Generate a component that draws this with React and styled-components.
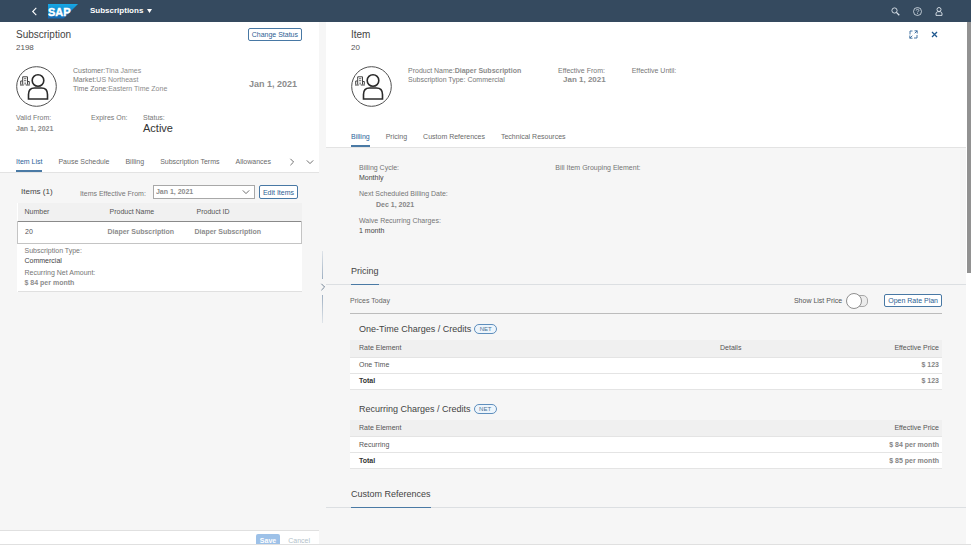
import React, { useState } from "react";
import styled, { createGlobalStyle } from "styled-components";

const GlobalStyle = createGlobalStyle`
    * {
        box-sizing: border-box;
    }
    body {
        margin: 0;
        background: #f6f6f6;
        color: #555;
        font-family: "Liberation Sans", Arial, sans-serif;
        font-size: 7px;
        line-height: 10px;
    }
    button, input, select {
        font-family: inherit;
        font-size: inherit;
        line-height: inherit;
        margin: 0;
    }
    svg {
        display: block;
        flex: none;
    }
`

const Page = styled.div`
    display: flex;
    flex-direction: column;
    height: 100vh;
    overflow: hidden;
    border-bottom: 1px solid #e0e0e0;
`
const ShellBar = styled.header`
    display: flex;
    align-items: center;
    flex: none;
    height: 22px;
    padding: 0 27px 0 29px;
    background: #354a5f;
    color: #fff;
`
const ShellTitle = styled.button`
    display: flex;
    align-items: center;
    gap: 4px;
    padding: 0;
    border: 0;
    background: none;
    color: #fff;
    font-size: 8px;
    font-weight: 700;
    cursor: pointer;
`
const IconButton = styled.button`
    display: flex;
    align-items: center;
    justify-content: center;
    width: 10px;
    height: 12px;
    padding: 0;
    border: 0;
    background: none;
    color: inherit;
    cursor: pointer;
`
const Logo = styled.svg`
    margin: 0 12px 0 9px;
`
const ShellActions = styled.div`
    display: flex;
    gap: 12px;
    margin-left: auto;
`
const Columns = styled.div`
    display: grid;
    grid-template-columns: minmax(280px, 319fr) 7px minmax(0, 640fr) 5px;
    flex: 1;
    min-height: 0;
`
const Panel = styled.section`
    display: flex;
    flex-direction: column;
    min-width: 0;
    min-height: 0;
    overflow: hidden;
`
const PanelHeader = styled.div`
    flex: none;
    padding: 6px ${props => props.$right} 0 ${props => props.$left};
    background: #fff;
    border-bottom: 1px solid #e3e3e3;
`
const TitleRow = styled.div`
    display: flex;
    justify-content: space-between;
    align-items: flex-start;
    height: 26px;
`
const Title = styled.h1`
    margin: 0;
    color: #444;
    font-size: 10px;
    font-weight: 400;
    line-height: 13px;
`
const SubTitle = styled.div`
    color: #555;
    font-size: 8px;
    line-height: 13px;
`
const TitleActions = styled.div`
    display: flex;
    gap: 11px;
    padding-right: 27px;
`
const OutlineButton = styled.button`
    height: ${props => props.$height || "13px"};
    padding: 0 3px;
    border: 1px solid #4878a4;
    border-radius: 2px;
    background: #fff;
    color: #2c6093;
    line-height: 11px;
    white-space: nowrap;
    cursor: pointer;
`
const Summary = styled.div`
    display: flex;
    height: 41px;
    margin-top: 12px;
`
const Info = styled.div`
    width: ${props => props.$width || "auto"};
    margin-left: 16px;
    color: #777;
    line-height: 9px;
    white-space: nowrap;
`
const Dates = styled.div`
    display: flex;
    gap: 26px;
    color: #777;
    line-height: 9px;
    white-space: nowrap;
`
const Muted = styled.span`
    color: #8c8c8c;
    font-weight: ${props => (props.$bold ? 700 : 400)};
`
const EffectiveDate = styled.div`
    padding-left: 5px;
    color: #8c8c8c;
    font-size: 8px;
    font-weight: 700;
    line-height: 10px;
`
const BigDate = styled.div`
    margin: auto 5px auto auto;
    padding-bottom: 5px;
    color: #8c8c8c;
    font-size: 9px;
    font-weight: 700;
`
const Facts = styled.div`
    display: grid;
    grid-template-columns: 75px 52px 1fr;
    height: 24px;
    margin-top: 6px;
    color: #777;
`
const DateValue = styled.div`
    padding-top: 1px;
    color: #8c8c8c;
    font-weight: 700;
`
const Status = styled.div`
    color: #333;
    font-size: 11px;
    line-height: 11px;
`
const Tabs = styled.nav`
    display: flex;
    align-items: stretch;
    gap: 16px;
    height: 20px;
    margin-top: ${props => props.$top};
`
const Tab = styled.button`
    padding: 2px 0 0;
    border: 0;
    border-bottom: 2px solid ${props => (props.$active ? "#4a7aa5" : "transparent")};
    background: none;
    color: ${props => (props.$active ? "#2c6399" : "#6a6a6a")};
    white-space: nowrap;
    cursor: pointer;
`
const TabArrows = styled.div`
    display: flex;
    align-items: center;
    gap: 8px;
    margin-left: auto;
    color: #6a6a6a;
`
const ItemsArea = styled.div`
    padding: 12px 17px 0;
`
const ItemsBar = styled.div`
    display: flex;
    align-items: center;
    height: 14px;
    margin-bottom: 4px;
    padding: 0 4px;
`
const ItemsCount = styled.h2`
    margin: 0 auto 0 0;
    color: #444;
    font-size: 8px;
    font-weight: 400;
`
const FilterLabel = styled.label`
    margin-right: 7px;
    padding-top: 4px;
    color: #777;
`
const SelectBox = styled.div`
    display: grid;
    align-items: center;
    width: 102px;
    margin-right: 4px;
    color: #666;
    > * {
        grid-area: 1 / 1;
    }
    > svg {
        justify-self: end;
        margin-right: 5px;
        pointer-events: none;
    }
`
const Select = styled.select`
    width: 100%;
    height: 14px;
    padding: 0 2px;
    appearance: none;
    border: 1px solid #a8a8a8;
    border-radius: 0;
    background: #fff;
    color: #8c8c8c;
    font-weight: 700;
    line-height: 12px;
`
const Table = styled.table`
    width: 100%;
    table-layout: fixed;
    border-collapse: collapse;
    background: #fff;
    th, td {
        padding: 0;
        text-align: left;
        font-weight: 400;
    }
`
const ItemHead = styled.tr`
    height: 18px;
    background: #f1f1f1;
    th:not(:first-child) {
        padding-left: 2px;
    }
    th:first-child {
        padding-left: 7px;
    }
`
const ItemRow = styled.tr`
    height: 22px;
    border: 1px solid #c4c4c4;
    border-top-color: #8a8a8a;
    td:first-child {
        padding-left: 7px;
    }
`
const DetailCell = styled.td`
    && {
        height: 48px;
        padding: 2px 7px;
        border-bottom: 1px solid #e0e0e0;
        vertical-align: top;
    }
`
const FieldLabel = styled.div`
    color: #757575;
`
const FieldValue = styled.div`
    margin-bottom: 2px;
    color: #444;
`
const Footer = styled.footer`
    display: flex;
    flex: none;
    justify-content: flex-end;
    align-items: flex-start;
    gap: 8px;
    height: 14px;
    margin-top: auto;
    padding: 3px 9px 0;
    border-top: 1px solid #e0e0e0;
    background: #fff;
`
const SaveButton = styled.button`
    height: 13px;
    padding: 0 4px;
    border: 0;
    border-radius: 2px;
    background: #9dc1e8;
    color: #fff;
    font-weight: 700;
`
const CancelButton = styled.button`
    height: 13px;
    padding: 0;
    border: 0;
    background: none;
    color: #b3bfca;
`
const Splitter = styled.div`
    display: flex;
    flex-direction: column;
    align-items: center;
    justify-content: center;
    gap: 4px;
    padding-top: 7px;
    color: #6d7f91;
`
const SplitLine = styled.div`
    width: 1px;
    height: 28px;
    background: linear-gradient(to ${props => props.$to}, #9fb0c2, #dfe4e9);
`
const ScrollTrack = styled.div`
    padding-left: 1px;
    background: #fff;
`
const ScrollThumb = styled.div`
    height: 48%;
    background: #929292;
`
const BillingFields = styled.div`
    display: grid;
    grid-template-columns: 196fr 410fr;
    padding: 15px 0 0 33px;
`
const Field = styled.div`
    margin-bottom: 6px;
`
const BillingDate = styled.div`
    padding: 1px 0 0 17px;
    color: #858585;
    font-weight: 700;
`
const SectionHeading = styled.div`
    padding: ${props => props.$top} 25px 0;
    border-bottom: 1px solid #dcdfe2;
`
const SectionTitle = styled.h2`
    display: inline-block;
    height: 20px;
    margin: 0 0 -1px;
    border-bottom: 1px solid #4a7aa5;
    color: #444;
    font-size: 9px;
    font-weight: 400;
    line-height: 12px;
    vertical-align: top;
`
const PricingArea = styled.div`
    padding: 0 24px;
`
const PricingBar = styled.div`
    display: flex;
    align-items: center;
    height: 29px;
    padding-top: 3px;
    border-bottom: 1px solid #bcbcbc;
    color: #666;
`
const SwitchLabel = styled.label`
    margin: 0 2px 0 auto;
    color: #555;
`
const Switch = styled.input`
    display: flex;
    align-items: center;
    appearance: none;
    width: 22px;
    height: 13px;
    margin-right: 18px;
    padding-left: 4px;
    cursor: pointer;
    &::before {
        content: "";
        flex: none;
        width: 18px;
        height: 10px;
        border: 1px solid #a8a8a8;
        border-radius: 5px;
        background: #ececec;
    }
    &::after {
        content: "";
        flex: none;
        width: 14px;
        height: 14px;
        margin-left: ${props => (props.checked ? "-14px" : "-22px")};
        border: 1px solid #8f8f8f;
        border-radius: 50%;
        background: #fff;
    }
`
const ChargeTitle = styled.h3`
    display: flex;
    align-items: center;
    gap: 3px;
    height: ${props => props.$height};
    margin: 0;
    padding: ${props => props.$pad} 0 0 9px;
    color: #444;
    font-size: 9px;
    font-weight: 400;
`
const Badge = styled.span`
    width: 23px;
    height: 10px;
    border: 1px solid #5f8fbd;
    border-radius: 5px;
    background: #edf5fc;
    color: #4d7396;
    font-size: 6px;
    line-height: 8px;
    text-align: center;
`
const ChargeTable = styled(Table)`
    && th, && td {
        padding: 0 4px 0 9px;
        border-bottom: 1px solid #e4e4e4;
    }
    && th:last-child, && td:last-child {
        padding-right: 3px;
        text-align: right;
    }
    && td:last-child {
        color: #858585;
        font-weight: 700;
    }
    && th:nth-child(2) {
        padding-left: 0;
    }
    thead tr {
        height: 17px;
        background: #f0f0f0;
    }
    tbody tr {
        height: 16px;
    }
    tbody tr:last-child td:first-child {
        color: #333;
        font-weight: 700;
    }
`

const Chevron = ({ dir = "right", size = 8 }) => {
    const paths = { right: "M3 1l4 4-4 4", left: "M7 1L3 5l4 4", down: "M1 3l4 4 4-4" }
    return (
        <svg width={size} height={size} viewBox="0 0 10 10" fill="none" stroke="currentColor" strokeWidth="1.2">
            <path d={paths[dir]} />
        </svg>
    )
}

const Avatar = () => (
    <svg width="41" height="41" viewBox="0 0 41 41" fill="none">
        <circle cx="20.5" cy="20.5" r="19.8" stroke="#4f4f4f" strokeWidth="1" />
        <g stroke="#2b2b2b" strokeWidth="1.6">
            <circle cx="22" cy="14.5" r="5.8" />
            <path d="M12.5 33v-4.5c0-4.500 2.500-6.500 6-6.500h7c3.500 0 6 2 6 6.500V33z" />
        </g>
        <g stroke="#444" strokeWidth="1">
            <path d="M6.700 18.500v-7.700h4.800v7.700M4.700 18.500v-3.500h2M11.500 15.500h1.800v3M4 19h3.800M9.800 19h4M9.100 18.500v-2" />
            <path d="M8 12.700h2.300M8 14.700h2.300" strokeWidth="0.8" />
        </g>
    </svg>
)

const SapLogo = () => (
    <Logo width="30" height="15" viewBox="0 0 30 15" role="img" aria-label="SAP">
        <defs>
            <linearGradient id="sapBlue" x1="0" y1="0" x2="0" y2="1">
                <stop offset="0" stopColor="#16a9e6" />
                <stop offset="1" stopColor="#1467b3" />
            </linearGradient>
        </defs>
        <path d="M0 0h30L15.500 14.500H0z" fill="url(#sapBlue)" />
        <text x="0" y="12" fill="#fff" stroke="#fff" strokeWidth="0.4" fontSize="11" fontWeight="700">SAP</text>
    </Logo>
)

const SearchIcon = () => (
    <svg width="9" height="9" viewBox="0 0 9 9" fill="none" stroke="#dce4ec">
        <circle cx="3.500" cy="3.500" r="2.600" strokeWidth="0.9" />
        <path d="M5.400 5.400L8.300 8.300" strokeWidth="1.3" />
    </svg>
)

const HelpIcon = () => (
    <svg width="9" height="9" viewBox="0 0 9 9" fill="none" stroke="#dce4ec" strokeWidth="0.8">
        <circle cx="4.500" cy="4.500" r="4" />
        <path d="M3.200 3.500c0-1.600 2.600-1.600 2.600 0 0 .9-1.300 1-1.300 1.900M4.500 6.200v.9" />
    </svg>
)

const UserIcon = () => (
    <svg width="8" height="9" viewBox="0 0 8 9" fill="none" stroke="#dce4ec" strokeWidth="0.9">
        <circle cx="4" cy="2.500" r="2" />
        <path d="M1 8.400V7c0-1.500.8-2.300 2-2.300h2C6.200 4.700 7 5.500 7 7v1.400z" />
    </svg>
)

const ExpandIcon = () => (
    <svg width="9" height="9" viewBox="0 0 9 9" fill="none" stroke="#33669a" strokeWidth="0.9">
        <path d="M3.500 1H1v3.500M5.500.8h2.700v2.700M8.200.8L5.700 3.300M8 5v3H5M.8 5.500v2.700h2.700M.8 8.200l2.500-2.500" />
    </svg>
)

const CloseIcon = () => (
    <svg width="7" height="7" viewBox="0 0 7 7" stroke="#1f588f" strokeWidth="1.300">
        <path d="M1 1l5 5M6 1L1 6" />
    </svg>
)

const charges = [
    {
        title: "One-Time Charges / Credits",
        details: "Details",
        height: "26px",
        pad: "4px",
        rows: [["One Time", "$ 123"], ["Total", "$ 123"]],
    },
    {
        title: "Recurring Charges / Credits",
        details: "",
        height: "30px",
        pad: "8px",
        rows: [["Recurring", "$ 84 per month"], ["Total", "$ 85 per month"]],
    },
]

const TabList = ({ items, active, onSelect, top, children }) => (
    <Tabs $top={top}>
        {items.map(item => (
            <Tab key={item} $active={item === active} onClick={() => onSelect(item)}>{item}</Tab>
        ))}
        {children}
    </Tabs>
)

const SubscriptionPanel = () => {
    const [tab, setTab] = useState("Item List");

    return (
        <Panel>
            <PanelHeader $left="16px" $right="17px">
                <TitleRow>
                    <div>
                        <Title>Subscription</Title>
                        <SubTitle>2198</SubTitle>
                    </div>
                    <OutlineButton>Change Status</OutlineButton>
                </TitleRow>
                <Summary>
                    <Avatar />
                    <Info>
                        <div>Customer:<Muted>Tina James</Muted></div>
                        <div>Market:<Muted>US Northeast</Muted></div>
                        <div>Time Zone:<Muted>Eastern Time Zone</Muted></div>
                    </Info>
                    <BigDate>Jan 1, 2021</BigDate>
                </Summary>
                <Facts>
                    <div>Valid From:<DateValue>Jan 1, 2021</DateValue></div>
                    <div>Expires On:</div>
                    <div>Status:<Status>Active</Status></div>
                </Facts>
                <TabList
                    items={["Item List", "Pause Schedule", "Billing", "Subscription Terms", "Allowances"]}
                    active={tab}
                    onSelect={setTab}
                    top="15px"
                >
                    <TabArrows>
                        <IconButton aria-label="Next tabs"><Chevron /></IconButton>
                        <IconButton aria-label="All tabs"><Chevron dir="down" /></IconButton>
                    </TabArrows>
                </TabList>
            </PanelHeader>
            <ItemsArea>
                <ItemsBar>
                    <ItemsCount>Items (1)</ItemsCount>
                    <FilterLabel htmlFor="effective">Items Effective From:</FilterLabel>
                    <SelectBox>
                        <Select id="effective" defaultValue="Jan 1, 2021">
                            <option>Jan 1, 2021</option>
                        </Select>
                        <Chevron dir="down" />
                    </SelectBox>
                    <OutlineButton $height="14px">Edit Items</OutlineButton>
                </ItemsBar>
                <Table>
                    <colgroup>
                        <col width="90" />
                        <col width="87" />
                        <col />
                    </colgroup>
                    <thead>
                        <ItemHead>
                            <th>Number</th>
                            <th>Product Name</th>
                            <th>Product ID</th>
                        </ItemHead>
                    </thead>
                    <tbody>
                        <ItemRow>
                            <td>20</td>
                            <td><Muted $bold>Diaper Subscription</Muted></td>
                            <td><Muted $bold>Diaper Subscription</Muted></td>
                        </ItemRow>
                        <tr>
                            <DetailCell colSpan={3}>
                                <FieldLabel>Subscription Type:</FieldLabel>
                                <FieldValue>Commercial</FieldValue>
                                <FieldLabel>Recurring Net Amount:</FieldLabel>
                                <Muted $bold>$ 84 per month</Muted>
                            </DetailCell>
                        </tr>
                    </tbody>
                </Table>
            </ItemsArea>
            <Footer>
                <SaveButton>Save</SaveButton>
                <CancelButton>Cancel</CancelButton>
            </Footer>
        </Panel>
    )
}

const ItemPanel = () => {
    const [tab, setTab] = useState("Billing");
    const [listPrice, setListPrice] = useState(false);

    return (
        <Panel>
            <PanelHeader $left="25px" $right="0px">
                <TitleRow>
                    <div>
                        <Title>Item</Title>
                        <SubTitle>20</SubTitle>
                    </div>
                    <TitleActions>
                        <IconButton aria-label="Full screen"><ExpandIcon /></IconButton>
                        <IconButton aria-label="Close"><CloseIcon /></IconButton>
                    </TitleActions>
                </TitleRow>
                <Summary>
                    <Avatar />
                    <Info $width="150px">
                        <div>Product Name:<Muted $bold>Diaper Subscription</Muted></div>
                        <div>Subscription Type: Commercial</div>
                    </Info>
                    <Dates>
                        <div>
                            Effective From:
                            <EffectiveDate>Jan 1, 2021</EffectiveDate>
                        </div>
                        <div>Effective Until:</div>
                    </Dates>
                </Summary>
                <TabList
                    items={["Billing", "Pricing", "Custom References", "Technical Resources"]}
                    active={tab}
                    onSelect={setTab}
                    top="20px"
                />
            </PanelHeader>
            <BillingFields>
                <div>
                    <Field>
                        <FieldLabel>Billing Cycle:</FieldLabel>
                        <FieldValue>Monthly</FieldValue>
                    </Field>
                    <Field>
                        <FieldLabel>Next Scheduled Billing Date:</FieldLabel>
                        <BillingDate>Dec 1, 2021</BillingDate>
                    </Field>
                    <Field>
                        <FieldLabel>Waive Recurring Charges:</FieldLabel>
                        <FieldValue>1 month</FieldValue>
                    </Field>
                </div>
                <FieldLabel>Bill Item Grouping Element:</FieldLabel>
            </BillingFields>
            <SectionHeading $top="23px">
                <SectionTitle>Pricing</SectionTitle>
            </SectionHeading>
            <PricingArea>
                <PricingBar>
                    <span>Prices Today</span>
                    <SwitchLabel htmlFor="listPrice">Show List Price</SwitchLabel>
                    <Switch
                        id="listPrice"
                        type="checkbox"
                        checked={listPrice}
                        onChange={e => setListPrice(e.target.checked)}
                    />
                    <OutlineButton>Open Rate Plan</OutlineButton>
                </PricingBar>
                {charges.map(item => (
                    <React.Fragment key={item.title}>
                        <ChargeTitle $height={item.height} $pad={item.pad}>
                            {item.title}
                            <Badge>NET</Badge>
                        </ChargeTitle>
                        <ChargeTable>
                            <colgroup>
                                <col width="62.5%" />
                                <col width="18.5%" />
                                <col width="19%" />
                            </colgroup>
                            <thead>
                                <tr>
                                    <th>Rate Element</th>
                                    <th>{item.details}</th>
                                    <th>Effective Price</th>
                                </tr>
                            </thead>
                            <tbody>
                                {item.rows.map(([name, price]) => (
                                    <tr key={name}>
                                        <td>{name}</td>
                                        <td></td>
                                        <td>{price}</td>
                                    </tr>
                                ))}
                            </tbody>
                        </ChargeTable>
                    </React.Fragment>
                ))}
            </PricingArea>
            <SectionHeading $top="19px">
                <SectionTitle>Custom References</SectionTitle>
            </SectionHeading>
        </Panel>
    )
}

const App = () => {
    return (<Page>
        <GlobalStyle />
        <ShellBar>
            <IconButton aria-label="Back"><Chevron dir="left" size={9} /></IconButton>
            <SapLogo />
            <ShellTitle>
                Subscriptions
                <svg width="5" height="4" viewBox="0 0 5 4"><path d="M0 0h5L2.500 4z" fill="#fff" /></svg>
            </ShellTitle>
            <ShellActions>
                <IconButton aria-label="Search"><SearchIcon /></IconButton>
                <IconButton aria-label="Help"><HelpIcon /></IconButton>
                <IconButton aria-label="User"><UserIcon /></IconButton>
            </ShellActions>
        </ShellBar>
        <Columns>
            <SubscriptionPanel />
            <Splitter>
                <SplitLine $to="top" />
                <Chevron />
                <SplitLine $to="bottom" />
            </Splitter>
            <ItemPanel />
            <ScrollTrack>
                <ScrollThumb />
            </ScrollTrack>
        </Columns>
    </Page>)
}

export default App;
